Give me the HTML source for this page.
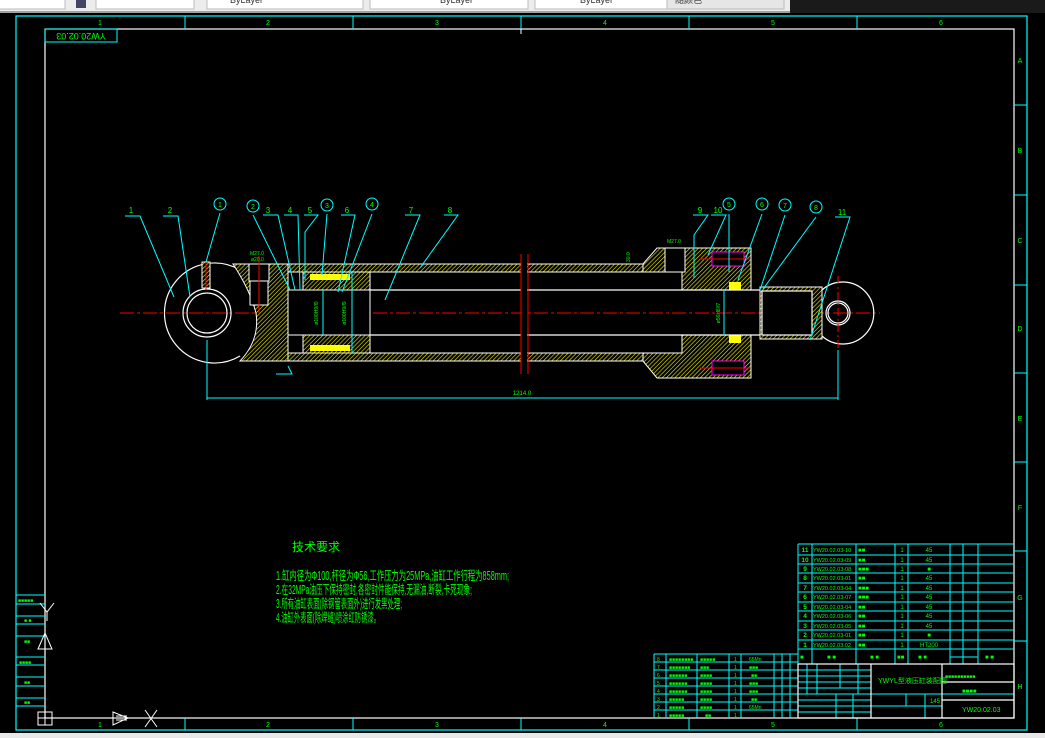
<!DOCTYPE html>
<html><head><meta charset="utf-8"><style>
html,body{margin:0;padding:0;background:#000;width:1045px;height:738px;overflow:hidden}
svg{display:block}
text{font-family:"Liberation Sans","Noto Sans CJK SC",sans-serif}
</style></head><body>
<svg width="1045" height="738" viewBox="0 0 1045 738" xmlns="http://www.w3.org/2000/svg">
<defs>
<pattern id="h" width="3" height="3" patternUnits="userSpaceOnUse" patternTransform="rotate(45)">
<rect width="3" height="3" fill="#000"/><line x1="0" y1="0" x2="0" y2="3" stroke="#e8e800" stroke-width="1.3"/></pattern>
</defs>
<!-- toolbar -->
<rect x="0" y="0" width="790" height="12" fill="#ececec"/>
<rect x="0" y="11" width="790" height="2" fill="#a0a0a0"/>
<rect x="790" y="0" width="255" height="13" fill="#1a1a1a"/>
<g fill="#fff" stroke="#bbb" stroke-width="1">
<rect x="-1" y="-1" width="66" height="10"/><rect x="96" y="-1" width="98" height="10"/>
<rect x="207" y="-1" width="156" height="10"/><rect x="370" y="-1" width="158" height="10"/>
<rect x="535" y="-1" width="160" height="10"/><rect x="667" y="-1" width="117" height="10" fill="#e6e6e6"/>
</g>
<rect x="76" y="0" width="10" height="8" fill="#446"/>
<g font-size="9" fill="#333"><text x="230" y="3">ByLayer</text><text x="440" y="3">ByLayer</text><text x="580" y="3">ByLayer</text><text x="675" y="3">随颜色</text></g>
<rect x="0" y="733" width="1045" height="5" fill="#e8e8e8"/>
<!-- frame -->
<rect x="16" y="16" width="1011" height="714" fill="none" stroke="#0ff" stroke-width="1.2"/>
<rect x="45" y="29" width="969" height="689" fill="none" stroke="#fff" stroke-width="1.2"/>
<g stroke="#0ff" stroke-width="1">
<line x1="185" y1="16" x2="185" y2="29"/><line x1="353" y1="16" x2="353" y2="29"/><line x1="521" y1="16" x2="521" y2="29"/><line x1="689" y1="16" x2="689" y2="29"/><line x1="857" y1="16" x2="857" y2="29"/>
<line x1="185" y1="718" x2="185" y2="730"/><line x1="353" y1="718" x2="353" y2="730"/><line x1="521" y1="718" x2="521" y2="730"/><line x1="689" y1="718" x2="689" y2="730"/><line x1="857" y1="718" x2="857" y2="730"/>
<line x1="1014" y1="105" x2="1027" y2="105"/><line x1="1014" y1="195" x2="1027" y2="195"/><line x1="1014" y1="285" x2="1027" y2="285"/><line x1="1014" y1="373" x2="1027" y2="373"/><line x1="1014" y1="462" x2="1027" y2="462"/><line x1="1014" y1="551" x2="1027" y2="551"/><line x1="1014" y1="641" x2="1027" y2="641"/>
</g>
<line x1="521" y1="29" x2="521" y2="34" stroke="#fff"/>
<g fill="#0f0" font-size="7" text-anchor="middle">
<text x="100" y="25">1</text><text x="268" y="25">2</text><text x="437" y="25">3</text><text x="605" y="25">4</text><text x="773" y="25">5</text><text x="941" y="25">6</text>
<text x="100" y="727">1</text><text x="268" y="727">2</text><text x="437" y="727">3</text><text x="605" y="727">4</text><text x="773" y="727">5</text><text x="941" y="727">6</text>
<text x="1020" y="63">A</text><text x="1020" y="153">B</text><text x="1020" y="243">C</text><text x="1020" y="331">D</text><text x="1020" y="421">E</text><text x="1020" y="510">F</text><text x="1020" y="600">G</text><text x="1020" y="689">H</text>
</g>
<rect x="45" y="29" width="72" height="13" fill="none" stroke="#0ff"/>
<text x="81" y="39" fill="#0f0" font-size="9" text-anchor="middle" transform="rotate(180 81 36)">YW20.02.03</text>
<!-- left strip -->
<g stroke="#0ff" stroke-width="1" fill="none">
<line x1="16" y1="595" x2="45" y2="595"/><line x1="16" y1="604" x2="45" y2="604"/><line x1="16" y1="616" x2="45" y2="616"/><line x1="16" y1="624" x2="45" y2="624"/><line x1="16" y1="636" x2="45" y2="636"/><line x1="16" y1="657" x2="45" y2="657"/><line x1="16" y1="665" x2="45" y2="665"/><line x1="16" y1="677" x2="45" y2="677"/><line x1="16" y1="686" x2="45" y2="686"/><line x1="16" y1="698" x2="45" y2="698"/><line x1="16" y1="706" x2="45" y2="706"/>
</g>
<g fill="#0f0" font-size="5"><text x="18" y="602">■■■■■</text><text x="24" y="622">■ ■</text><text x="24" y="643">■■</text><text x="19" y="664">■■■■</text><text x="24" y="684">■■</text><text x="24" y="704">■■</text></g>
<g stroke="#fff" fill="none" stroke-width="1">
<path d="M40 603 L47 612 L54 603 M47 612 V621"/><path d="M38 649 L45 633 L52 649 Z M45 635 V649"/>
<rect x="38" y="712" width="14" height="13"/><line x1="45" y1="712" x2="45" y2="725"/><line x1="38" y1="718" x2="52" y2="718"/>
<path d="M113 712 L128 718 L113 725 Z M116 716 H127 M116 720 H127"/><path d="M145 710 L157 727 M157 710 L145 727"/>
</g>
<!-- centerline -->
<line x1="120" y1="313" x2="880" y2="313" stroke="#f00" stroke-width="1" stroke-dasharray="14 3 3 3"/>
<!-- left clevis -->
<g fill="none" stroke="#fff" stroke-width="1.2">
<path d="M240 270 A50 50 0 1 0 240 356"/>
<circle cx="207" cy="313" r="24"/><circle cx="207" cy="313" r="20"/>
</g>
<rect x="202" y="262" width="8" height="26" fill="url(#h)" stroke="#fff"/>
<line x1="206" y1="262" x2="206" y2="290" stroke="#f00"/>
<!-- left cap -->
<path d="M233 264 H288 V361 H240 Q260 340 256 313 Q250 290 233 264 Z" fill="url(#h)" stroke="#fff"/>
<rect x="249" y="264" width="20" height="17" fill="#000" stroke="#fff"/><rect x="250" y="281" width="18" height="24" fill="#000" stroke="#fff"/>
<line x1="259" y1="256" x2="259" y2="313" stroke="#f00"/>
<g fill="#0f0" font-size="5"><text x="250" y="255">M27.0</text><text x="251" y="261">ø20.0</text></g>
<!-- barrel -->
<rect x="288" y="264" width="355" height="8" fill="url(#h)" stroke="#fff"/>
<rect x="288" y="353" width="355" height="8" fill="url(#h)" stroke="#fff"/>
<path d="M643 264 L657 248 H751 V290 H682 V272 H643 Z" fill="url(#h)" stroke="#fff"/>
<path d="M643 361 L657 378 H751 V335 H682 V353 H643 Z" fill="url(#h)" stroke="#fff"/>
<rect x="665" y="248" width="20" height="24" fill="#000" stroke="#fff"/>
<rect x="712" y="252" width="32" height="14" fill="#000" stroke="#f0f"/><rect x="712" y="361" width="32" height="14" fill="#000" stroke="#f0f"/>
<line x1="700" y1="259" x2="750" y2="259" stroke="#f00"/><line x1="700" y1="368" x2="750" y2="368" stroke="#f00"/>
<rect x="729" y="282" width="12" height="8" fill="#ff0"/><rect x="729" y="335" width="12" height="8" fill="#ff0"/>
<g fill="#0f0" font-size="5"><text x="667" y="243">M27.0</text></g>
<text x="630" y="262" fill="#0f0" font-size="5" transform="rotate(-90 630 262)">30.0</text>
<!-- piston -->
<path d="M303 272 H370 V290 H303 Z" fill="url(#h)" stroke="#fff"/>
<path d="M303 335 H370 V353 H303 Z" fill="url(#h)" stroke="#fff"/>
<rect x="310" y="274" width="40" height="6" fill="#ff0"/><rect x="310" y="345" width="40" height="6" fill="#ff0"/>
<rect x="288" y="290" width="82" height="45" fill="#000" stroke="#fff"/>
<line x1="323" y1="290" x2="323" y2="335" stroke="#0ff"/><line x1="352" y1="272" x2="352" y2="353" stroke="#0ff"/>
<text x="318" y="313" fill="#0f0" font-size="5" text-anchor="middle" transform="rotate(-90 318 313)">ø100H9/f9</text>
<text x="346" y="313" fill="#0f0" font-size="5" text-anchor="middle" transform="rotate(-90 346 313)">ø100H9/f9</text>
<!-- rod -->
<line x1="370" y1="290" x2="760" y2="290" stroke="#fff" stroke-width="1.2"/>
<line x1="370" y1="335" x2="760" y2="335" stroke="#fff" stroke-width="1.2"/>
<line x1="724" y1="290" x2="724" y2="335" stroke="#0ff"/>
<text x="720" y="313" fill="#0f0" font-size="5" text-anchor="middle" transform="rotate(-90 720 313)">ø56H8/f7</text>
<!-- break -->
<rect x="521" y="255" width="6" height="120" fill="#000"/>
<line x1="521" y1="254" x2="521" y2="374" stroke="#f00"/><line x1="528" y1="254" x2="528" y2="374" stroke="#f00"/>
<!-- rod end -->
<rect x="760" y="287" width="62" height="52" fill="url(#h)" stroke="#fff"/>
<rect x="762" y="291" width="50" height="44" fill="#000" stroke="#fff" stroke-width="1.2"/>
<g fill="none" stroke="#fff" stroke-width="1.2"><path d="M822 290 A31 31 0 1 1 822 336"/><circle cx="838" cy="313" r="12"/><circle cx="838" cy="313" r="10"/></g>
<line x1="838" y1="276" x2="838" y2="350" stroke="#f00" stroke-dasharray="8 3 2 3"/>
<!-- dimension -->
<g stroke="#0ff" stroke-width="1"><line x1="207" y1="340" x2="207" y2="400"/><line x1="838" y1="350" x2="838" y2="400"/><line x1="207" y1="398" x2="838" y2="398"/></g>
<text x="522" y="395" fill="#0f0" font-size="6" text-anchor="middle">1214.0</text>
<g stroke="#0ff" fill="none"><path d="M276 374 H292 L288 366"/></g>
<!-- leaders -->
<g stroke="#0ff" stroke-width="1" fill="none">
<path d="M125 216 H140 L174 297"/><path d="M163 216 H178 L190 297"/>
<path d="M220 213 L206 262"/><path d="M253 215 L290 290"/><path d="M263 215 H278 L295 290"/><path d="M284 215 H298 L300 290"/>
<path d="M304 215 H318 L305 232 V280"/><path d="M327 214 L322 275"/><path d="M341 215 H355 L338 292"/><path d="M372 214 L342 292"/>
<path d="M405 215 H420 L385 300"/><path d="M444 215 H458 L420 268"/>
<path d="M693 215 H708 L694 235 V278"/><path d="M711 215 H726 L708 255"/><path d="M729 214 V272"/><path d="M762 214 L738 280"/><path d="M785 215 L760 290"/><path d="M816 217 L763 289"/><path d="M835 217 H850 L810 340"/>
</g>
<g stroke="#0ff" fill="none"><circle cx="220" cy="204" r="6"/><circle cx="253" cy="206" r="6"/><circle cx="327" cy="205" r="6"/><circle cx="372" cy="204" r="6"/><circle cx="729" cy="204" r="6"/><circle cx="762" cy="204" r="6"/><circle cx="785" cy="205" r="6"/><circle cx="816" cy="207" r="6"/></g>
<g fill="#0f0" font-size="8" text-anchor="middle">
<text x="131" y="213">1</text><text x="170" y="213">2</text><text x="220" y="207" font-size="7">1</text><text x="253" y="209" font-size="7">2</text><text x="268" y="213">3</text><text x="290" y="213">4</text><text x="310" y="213">5</text><text x="327" y="208" font-size="7">3</text><text x="347" y="213">6</text><text x="372" y="207" font-size="7">4</text><text x="411" y="213">7</text><text x="450" y="213">8</text>
<text x="700" y="213">9</text><text x="718" y="213">10</text><text x="729" y="207" font-size="7">5</text><text x="762" y="207" font-size="7">6</text><text x="785" y="208" font-size="7">7</text><text x="816" y="210" font-size="7">8</text><text x="842" y="215">11</text>
</g>
<!-- tech requirements -->
<g fill="#0f0">
<text x="292" y="551" font-size="12">技术要求</text>
<g font-size="12.5"><text x="276" y="580" textLength="233" lengthAdjust="spacingAndGlyphs">1.缸内径为Φ100,杆径为Φ56,工作压力为25MPa,油缸工作行程为858mm;</text>
<text x="276" y="594" textLength="196" lengthAdjust="spacingAndGlyphs">2.在32MPa油压下保持密封,各密封件能保持,无漏油,断裂,卡死现象;</text>
<text x="276" y="608" textLength="126" lengthAdjust="spacingAndGlyphs">3.所有油缸表面(除钢管表面外)进行发黑处理;</text>
<text x="276" y="622" textLength="104" lengthAdjust="spacingAndGlyphs">4.油缸外表面(除焊缝)喷涂红防锈漆。</text></g>
</g>
<!-- parts list -->
<g stroke="#0ff" stroke-width="1" fill="none">
<line x1="798" y1="544" x2="1014" y2="544"/>
<line x1="798" y1="555" x2="1014" y2="555"/><line x1="798" y1="564" x2="1014" y2="564"/><line x1="798" y1="573" x2="1014" y2="573"/><line x1="798" y1="583" x2="1014" y2="583"/><line x1="798" y1="592" x2="1014" y2="592"/><line x1="798" y1="602" x2="1014" y2="602"/><line x1="798" y1="611" x2="1014" y2="611"/><line x1="798" y1="621" x2="1014" y2="621"/><line x1="798" y1="630" x2="1014" y2="630"/><line x1="798" y1="640" x2="1014" y2="640"/><line x1="798" y1="649" x2="1014" y2="649"/>
<line x1="798" y1="544" x2="798" y2="718"/><line x1="812" y1="544" x2="812" y2="664"/><line x1="856" y1="544" x2="856" y2="664"/><line x1="895" y1="544" x2="895" y2="664"/><line x1="908" y1="544" x2="908" y2="664"/><line x1="950" y1="544" x2="950" y2="664"/><line x1="963" y1="544" x2="963" y2="664"/><line x1="978" y1="544" x2="978" y2="664"/>
<line x1="950" y1="657" x2="978" y2="657"/>
<line x1="798" y1="670" x2="871" y2="670"/><line x1="798" y1="676" x2="871" y2="676"/><line x1="798" y1="682" x2="871" y2="682"/><line x1="798" y1="688" x2="871" y2="688"/><line x1="798" y1="694" x2="1014" y2="694"/><line x1="798" y1="700" x2="871" y2="700"/><line x1="798" y1="706" x2="942" y2="706"/><line x1="798" y1="712" x2="871" y2="712"/>
<line x1="807" y1="664" x2="807" y2="694"/><line x1="817" y1="664" x2="817" y2="694"/><line x1="840" y1="664" x2="840" y2="688"/><line x1="858" y1="664" x2="858" y2="694"/><line x1="836" y1="694" x2="836" y2="718"/><line x1="853" y1="694" x2="853" y2="718"/>
<line x1="871" y1="694" x2="942" y2="694"/><line x1="906" y1="694" x2="906" y2="706"/><line x1="925" y1="694" x2="925" y2="706"/><line x1="925" y1="706" x2="925" y2="718"/>
<line x1="654" y1="654" x2="798" y2="654"/><line x1="654" y1="662" x2="798" y2="662"/><line x1="654" y1="670" x2="798" y2="670"/><line x1="654" y1="678" x2="798" y2="678"/><line x1="654" y1="686" x2="798" y2="686"/><line x1="654" y1="694" x2="798" y2="694"/><line x1="654" y1="702" x2="798" y2="702"/><line x1="654" y1="710" x2="798" y2="710"/>
<line x1="654" y1="654" x2="654" y2="718"/><line x1="666" y1="654" x2="666" y2="718"/><line x1="697" y1="654" x2="697" y2="718"/><line x1="729" y1="654" x2="729" y2="718"/><line x1="741" y1="654" x2="741" y2="718"/><line x1="774" y1="654" x2="774" y2="718"/><line x1="782" y1="654" x2="782" y2="718"/><line x1="790" y1="654" x2="790" y2="718"/>
</g>
<g stroke="#fff" stroke-width="1.2" fill="none">
<rect x="798" y="664" width="216" height="54"/><line x1="871" y1="664" x2="871" y2="718"/><line x1="942" y1="664" x2="942" y2="718"/><line x1="942" y1="682" x2="1014" y2="682"/><line x1="942" y1="700" x2="1014" y2="700"/>
</g>
<g fill="#0f0" font-size="6">
<g text-anchor="middle" font-weight="bold" font-size="6.5"><text x="805" y="552">11</text><text x="805" y="562">10</text><text x="805" y="571">9</text><text x="805" y="580">8</text><text x="805" y="590">7</text><text x="805" y="599">6</text><text x="805" y="609">5</text><text x="805" y="618">4</text><text x="805" y="628">3</text><text x="805" y="637">2</text><text x="805" y="647">1</text></g>
<g text-anchor="middle">
<text x="902" y="552">1</text><text x="902" y="562">1</text><text x="902" y="571">1</text><text x="902" y="580">1</text><text x="902" y="590">1</text><text x="902" y="599">1</text><text x="902" y="609">1</text><text x="902" y="618">1</text><text x="902" y="628">1</text><text x="902" y="637">1</text><text x="902" y="647">1</text>
<text x="929" y="552">45</text><text x="929" y="562">45</text><text x="929" y="571">■</text><text x="929" y="580">45</text><text x="929" y="590">45</text><text x="929" y="599">45</text><text x="929" y="609">45</text><text x="929" y="618">45</text><text x="929" y="628">45</text><text x="929" y="637">■</text><text x="929" y="647">HT200</text></g>
<g font-size="5.5"><text x="813" y="552">YW20.02.03-10</text><text x="813" y="562">YW20.02.03-09</text><text x="813" y="571">YW20.02.03-08</text><text x="813" y="580">YW20.02.03-01</text><text x="813" y="590">YW20.02.03-04</text><text x="813" y="599">YW20.02.03-07</text><text x="813" y="609">YW20.02.03-04</text><text x="813" y="618">YW20.02.03-06</text><text x="813" y="628">YW20.02.03-05</text><text x="813" y="637">YW20.02.03-01</text><text x="813" y="647">YW20.02.03.02</text></g>
<g><text x="858" y="552">■■</text><text x="858" y="562">■■</text><text x="858" y="571">■■■</text><text x="858" y="580">■■</text><text x="858" y="590">■■■</text><text x="858" y="599">■■■</text><text x="858" y="609">■■</text><text x="858" y="618">■■</text><text x="858" y="628">■■</text><text x="858" y="637">■■</text><text x="858" y="647">■■</text></g>
<text x="800" y="659">■</text><text x="827" y="659">■ ■</text><text x="870" y="659">■ ■</text><text x="897" y="659">■■</text><text x="918" y="659">■ ■</text><text x="985" y="659">■ ■</text>
<text x="878" y="683" font-size="7">YWYL型液压缸装配图</text>
<text x="945" y="678" font-size="5">■■■■■■■■■■</text><text x="962" y="693">■■■■</text>
<text x="962" y="712" font-size="7">YW20.02.03</text>
<text x="930" y="703">145</text>
<g font-size="5"><text x="669" y="661">■■■■■■■■</text><text x="669" y="669">■■■■■■■</text><text x="669" y="677">■■■■■■</text><text x="669" y="685">■■■■■■</text><text x="669" y="693">■■■■■■</text><text x="669" y="701">■■■■■</text><text x="669" y="709">■■■■■</text><text x="669" y="717">■■■■■</text>
<text x="700" y="661">■■■■■</text><text x="700" y="669">■■■</text><text x="700" y="677">■■■■</text><text x="700" y="685">■■■■</text><text x="700" y="693">■■■■</text><text x="700" y="701">■■■■</text><text x="700" y="709">■■■■</text><text x="705" y="717">■■</text>
<text x="734" y="661">1</text><text x="734" y="669">1</text><text x="734" y="677">1</text><text x="734" y="685">1</text><text x="734" y="693">1</text><text x="734" y="701">1</text><text x="734" y="709">1</text><text x="734" y="717">1</text>
<text x="749" y="661">65Mn</text><text x="749" y="669">■■■</text><text x="751" y="677">■■</text><text x="749" y="685">■■■</text><text x="749" y="693">■■■</text><text x="751" y="701">■■</text><text x="749" y="709">65Mn</text>
<text x="657" y="661">8</text><text x="657" y="669">7</text><text x="657" y="677">6</text><text x="657" y="685">5</text><text x="657" y="693">4</text><text x="657" y="701">3</text><text x="657" y="709">2</text><text x="657" y="717">1</text></g>
</g>
</svg>
</body></html>
